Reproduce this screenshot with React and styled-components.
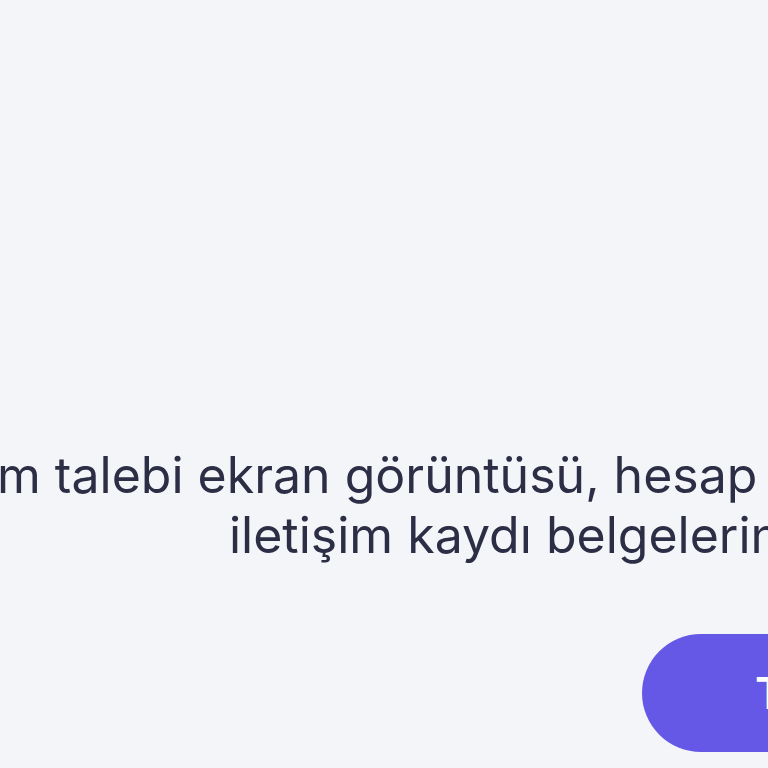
import React from "react";
import styled, { createGlobalStyle } from "styled-components";

const GlobalStyle = createGlobalStyle`
  html, body {
    margin: 0;
    padding: 0;
    background: #f4f5f9;
  }
  body {
    font-family: "Inter", "Noto Sans", sans-serif;
    -webkit-font-smoothing: antialiased;
  }
`;

const Page = styled.div`
  width: 768px;
  height: 768px;
  overflow: hidden;
  background: #f4f5f9;
  display: flex;
  flex-direction: column;
  padding-top: 445px;
  box-sizing: border-box;
`;

const Notice = styled.p`
  margin: 0;
  display: flex;
  flex-direction: column;
  color: #2c2e45;
  font-size: 50px;
  line-height: 60px;
  font-weight: 400;
  letter-spacing: 0;
`;

const Line = styled.span`
  display: block;
  white-space: nowrap;
  margin-left: ${(p) => p.$indent}px;
`;

const Actions = styled.div`
  display: flex;
  justify-content: flex-start;
  padding-left: 642px;
  margin-top: 69px;
`;

const Button = styled.button`
  flex: none;
  height: 118px;
  padding: 0 60px 0 113px;
  border: none;
  border-radius: 59px;
  background: #6658e6;
  color: #ffffff;
  font-family: "Inter", "Noto Sans", sans-serif;
  font-size: 44px;
  font-weight: 600;
  white-space: nowrap;
  cursor: pointer;
`;

export default function App() {
  return (
    <>
      <GlobalStyle />
      <Page>
        <Notice>
          <Line $indent={-3}>m talebi ekran görüntüsü, hesap</Line>
          <Line $indent={229}>iletişim kaydı belgelerini</Line>
        </Notice>
        <Actions>
          <Button>Tamam</Button>
        </Actions>
      </Page>
    </>
  );
}
